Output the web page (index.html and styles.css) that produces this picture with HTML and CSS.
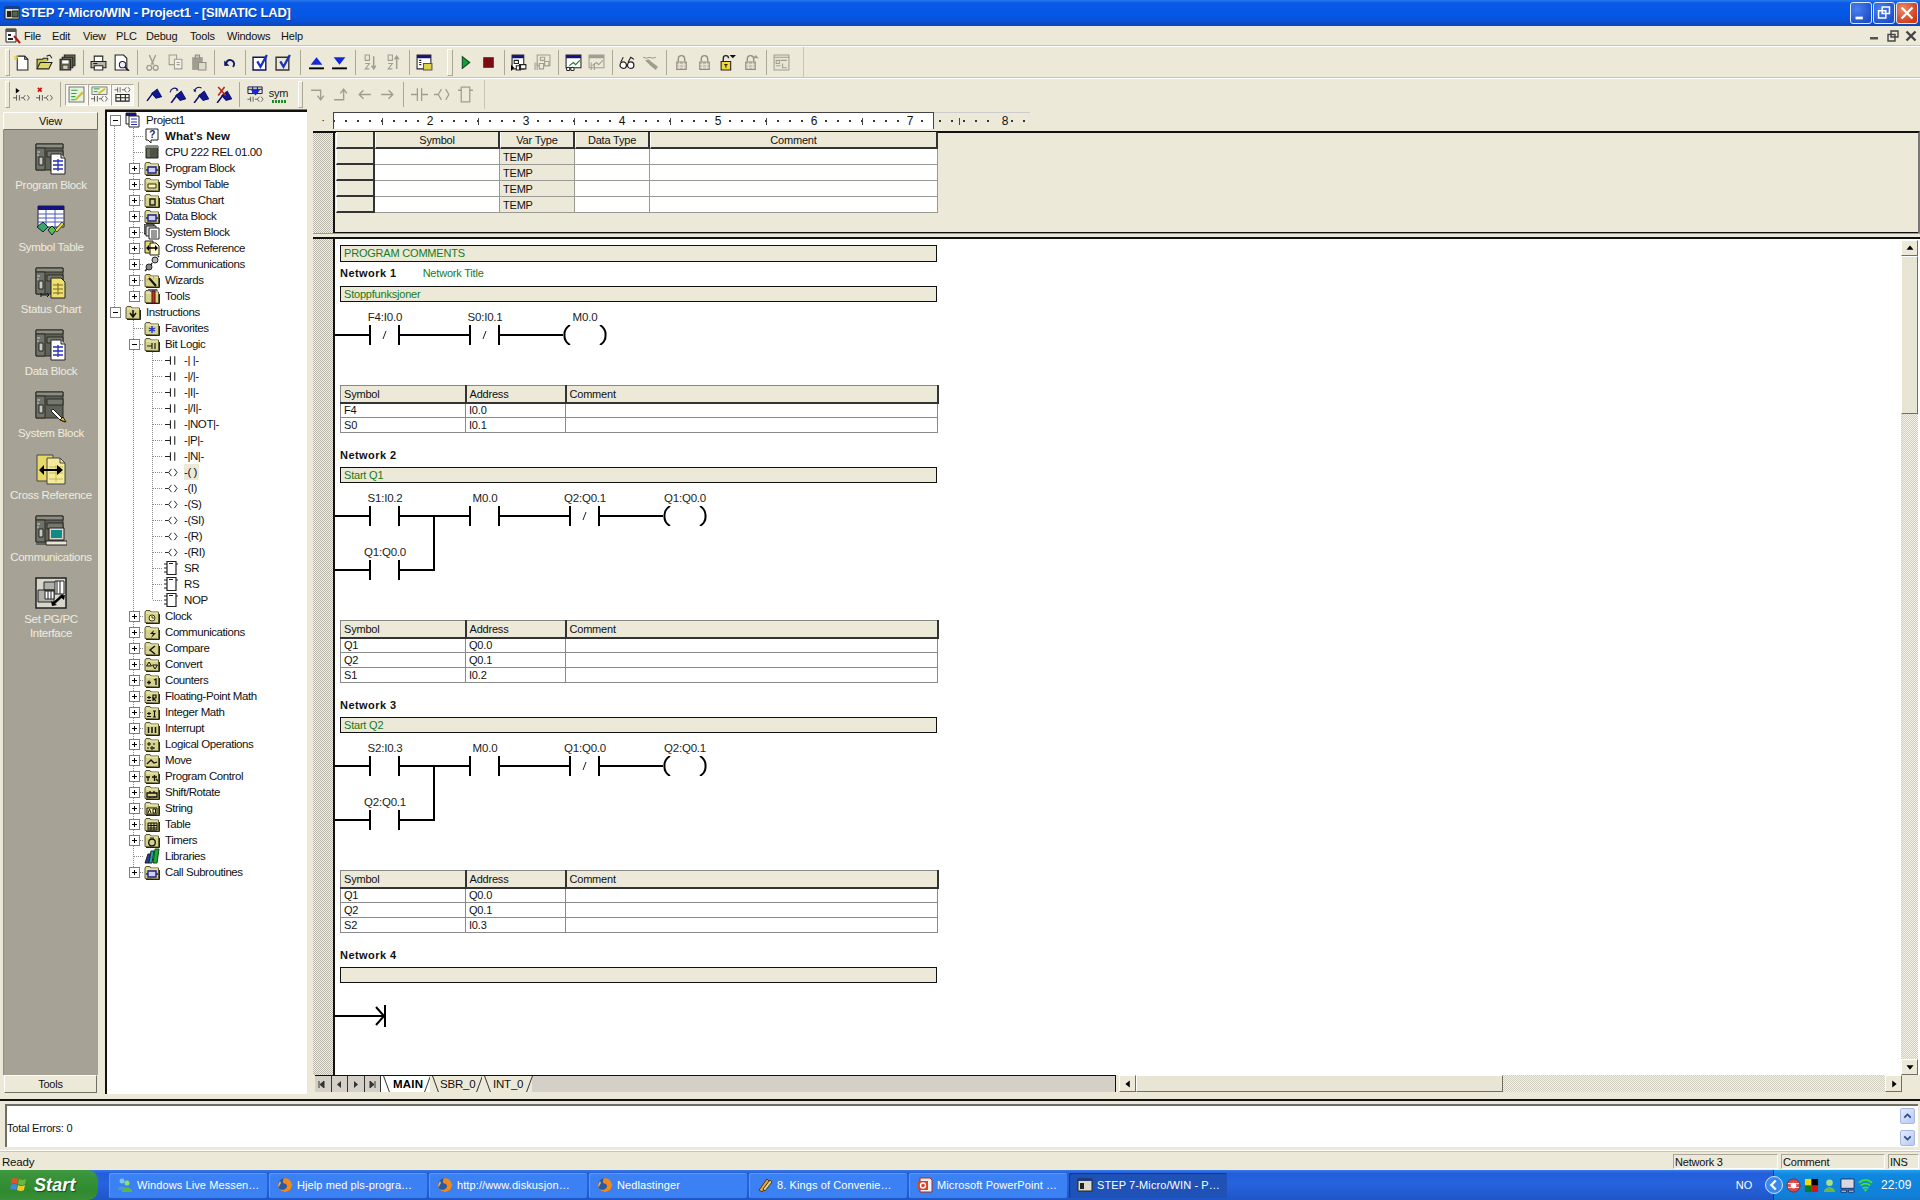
FILE: index.html
```html
<!DOCTYPE html>
<html lang="en">
<head>
<meta charset="utf-8">
<title>STEP 7-Micro/WIN - Project1 - [SIMATIC LAD]</title>
<link rel="stylesheet" href="styles.css">
</head>
<body>
<svg class="defs" aria-hidden="true">
  <defs>
    <symbol id="f" viewBox="0 0 16 16"><path d="M1 14.500V4l1-1.500h4l1 1.500h7.500v11z" fill="#d6d28a" stroke="#5c5a30"/><path d="M2 5h12" stroke="#f4f2c8"/><path d="M2 15.500h13.500V6" fill="none" stroke="#222"/></symbol>
    <symbol id="chip" viewBox="0 0 16 16"><path d="M4 7h8v6H4z" fill="#d0d0e8" stroke="#20208a" stroke-width="1.400"/><path d="M2 10h2M12 10h2" stroke="#20208a" stroke-width="1.400"/></symbol>
    <symbol id="ct" viewBox="0 0 12 12"><path d="M0 6h5M5 2v8M9 2v8" fill="none" stroke="#222"/></symbol>
    <symbol id="co" viewBox="0 0 14 12"><path d="M0 6h4M7 2 4 6l3 4M10 2l3 4-3 4" fill="none" stroke="#222"/></symbol>
    <symbol id="bx" viewBox="0 0 16 16"><path d="M4 1.500h9v13H4z" fill="#fff" stroke="#222" stroke-width="1.200"/><path d="M1 4h3M1 8h3M1 12h3M13 4h2M6 3.500h4" stroke="#222"/></symbol>
    <symbol id="ff" viewBox="0 0 16 16"><circle cx="8" cy="8" r="7" fill="#2a57a8"/><path d="M8 1a7 7 0 1 1-6.500 9.500C3 13 6 13.500 8 12c3-1.500 2.500-5-.5-5.500C6 6 5 5 6.500 3.500 5.500 3 6.500 1.500 8 1z" fill="#ec8a1e"/><path d="M3 4c-2 3-2 5-1.500 6.500L4 6z" fill="#f2b33a"/></symbol>
    <symbol id="plc" viewBox="0 0 32 32"><path d="M1 1h27v26H1z" fill="#5f6258" stroke="#2a2a24"/><path d="M1 1h27v4H1z" fill="#8b8d82" stroke="#2a2a24"/><path d="M1 5h9v22H1z" fill="#6f7268" stroke="#2a2a24"/><path d="M4 14h4v8H4z" fill="#c8c8c0" stroke="#222"/><path d="M12 8h16v6H12z" fill="#74776d" stroke="#2a2a24"/><path d="M2 9h3M2 12h2" stroke="#cfd0c8"/></symbol>
    <symbol id="doc" viewBox="0 0 32 32"><path d="M16 11h10l4 4v16H16z" fill="#fff" stroke="#222"/><path d="M26 11v4h4" fill="#ddd" stroke="#222"/><path d="M18 18h10M18 22h10M18 26h10M23 16v12" stroke="#2630b8" stroke-width="1.300"/></symbol>
    <symbol id="flag" viewBox="0 0 16 16"><path d="M1 14 7 6" stroke="#10106a" stroke-width="1.400"/><path d="m5.500 7 5-4 4 7-5 1.500z" fill="#101896" stroke="#10106a"/></symbol>
    <symbol id="lock" viewBox="0 0 14 16"><path d="M2.500 7.500h9v7h-9z" fill="#c0bdb0" stroke="#918e80"/><path d="M4 7V4.500a3 3 0 0 1 6 0V7" fill="none" stroke="#918e80" stroke-width="1.300"/><path d="M3 10h8M3 12.500h8M5 8v6M9 8v6" stroke="#e4e1d4"/></symbol>
    <symbol id="ladct" viewBox="0 0 31 20"><path d="M1 0v20M30 0v20" stroke="#000" stroke-width="2" fill="none"/></symbol>
    <symbol id="ladnc" viewBox="0 0 31 20"><path d="M1 0v20M30 0v20" stroke="#000" stroke-width="2" fill="none"/><path d="m14 14 3-8" stroke="#222" fill="none"/></symbol>
    <symbol id="ladco" viewBox="0 0 44 20"><path d="M7 0Q1 4 1.500 10 1 16 7 20M37 0q6 4 5.500 10 .5 6-5.500 10" stroke="#000" stroke-width="2" fill="none"/></symbol>
  </defs>
</svg>

<div class="app">
  <header class="titlebar">
    <svg class="title-ic" viewBox="0 0 16 16"><path d="M1 2h14v12H1z" fill="#dedbc8" stroke="#222"/><path d="M1 2h14v2H1z" fill="#1c3c8c"/><path d="M3 6h4v6H3z" fill="#222"/><path d="M8 6h6v6H8z" fill="#4a6a4a" stroke="#222"/></svg>
    <span class="title-text">STEP 7-Micro/WIN - Project1 - [SIMATIC LAD]</span>
    <span class="win-btn"><svg viewBox="0 0 22 22"><path d="M5 15h8v3H5z" fill="#fff"/></svg></span>
    <span class="win-btn"><svg viewBox="0 0 22 22"><path d="M9 4.500h8v7H9zM5 8.500h8v8H5z" fill="none" stroke="#fff" stroke-width="1.600"/></svg></span>
    <span class="win-btn close"><svg viewBox="0 0 22 22"><path d="m5 5 12 12M17 5 5 17" stroke="#fff" stroke-width="2.400"/></svg></span>
  </header>

  <nav class="menubar">
    <svg class="menu-ic" viewBox="0 0 16 16"><path d="M1 1h10v13H1z" fill="#fff" stroke="#222"/><path d="M1 1h10v3H1z" fill="#55584e"/><path d="M3 6h3v2H3zM3 10h5v2H3z" fill="#222"/><path d="m9 8 6 7" stroke="#b01818" stroke-width="2"/></svg>
    <span class="mi m1">File</span><span class="mi m2">Edit</span><span class="mi m3">View</span><span class="mi m4">PLC</span><span class="mi m5">Debug</span><span class="mi m6">Tools</span><span class="mi m7">Windows</span><span class="mi m8">Help</span>
    <span class="mdi-btns">
      <span class="mdi"><svg viewBox="0 0 14 14"><path d="M2 8h8v2.500H2z" fill="#55554c"/></svg></span>
      <span class="mdi"><svg viewBox="0 0 14 14"><path d="M5 2h7v6H5zM2 5.500h7V12H2z" fill="none" stroke="#444" stroke-width="1.400"/></svg></span>
      <span class="mdi"><svg viewBox="0 0 14 14"><path d="m2.500 2.500 9 9M11.500 2.500l-9 9" stroke="#444" stroke-width="2.400"/></svg></span>
    </span>
  </nav>

  <div class="toolrow tr1">
    <i class="grip"></i>
    <span class="tb"><svg viewBox="0 0 16 16"><path d="M4 2h7l3 3v10H4z" fill="#fff" stroke="#222"/><path d="M11 2v3h3" fill="none" stroke="#222"/><path d="M1 2l3 3M4 1v3M1 5h3" stroke="#e8c820"/></svg></span>
    <span class="tb"><svg viewBox="0 0 16 16"><path d="M1 14V5h5l1-1h4v2" fill="#c8c44a" stroke="#222"/><path d="M1 14 4 8h11l-3 6z" fill="#dcd866" stroke="#222"/><path d="m10 2 3-1 2 3" fill="none" stroke="#222"/></svg></span>
    <span class="tb"><svg viewBox="0 0 16 16"><path d="M5 1h10v10H5z" fill="#70705a" stroke="#222"/><path d="M3 3h10v10H3z" fill="#7c7c62" stroke="#222"/><path d="M1 5h10v10H1z" fill="#5c5c48" stroke="#222"/><path d="M3 6h6v3H3z" fill="#fff"/><path d="M4 11h4v3H4z" fill="#d0d0c0"/></svg></span>
    <i class="ts"></i>
    <span class="tb"><svg viewBox="0 0 16 16"><path d="M4 2h8v5H4z" fill="#fff" stroke="#222"/><path d="M1 7h14v6H1z" fill="#b8b6a8" stroke="#222"/><path d="M4 11h8v4H4z" fill="#fff" stroke="#222"/><path d="M3 9h4" stroke="#222"/></svg></span>
    <span class="tb"><svg viewBox="0 0 16 16"><path d="M2 1h8l3 3v11H2z" fill="#fff" stroke="#222"/><circle cx="9" cy="10" r="3" fill="#eef" stroke="#222"/><path d="m11 12 4 4" stroke="#222" stroke-width="1.600"/></svg></span>
    <i class="ts"></i>
    <span class="tb"><svg viewBox="0 0 16 16"><path d="M5 1l4 9M11 1 7 10" stroke="#a09e90" stroke-width="1.300"/><circle cx="5" cy="13" r="2.300" fill="none" stroke="#a09e90" stroke-width="1.200"/><circle cx="11" cy="13" r="2.300" fill="none" stroke="#a09e90" stroke-width="1.200"/></svg></span>
    <span class="tb"><svg viewBox="0 0 16 16"><path d="M2 1h7v9H2z" fill="#ece9d8" stroke="#a09e90"/><path d="M7 5h7v9H7z" fill="#f4f2e8" stroke="#a09e90"/><path d="M9 8h3M9 10h3" stroke="#a09e90"/></svg></span>
    <span class="tb"><svg viewBox="0 0 16 16"><path d="M2 3h10v12H2z" fill="#a09e90"/><path d="M5 1h4v3H5z" fill="#c8c6b8" stroke="#908e80"/><path d="M8 8h7v7H8z" fill="#dedccc" stroke="#908e80"/></svg></span>
    <i class="ts"></i>
    <span class="tb"><svg viewBox="0 0 16 16"><path d="M5 11C4 7 7 5 10 6c3 1 3 5 1 6" fill="none" stroke="#10186a" stroke-width="1.800"/><path d="M3 6v5h5z" fill="#10186a"/></svg></span>
    <i class="ts"></i>
    <span class="tb"><svg viewBox="0 0 16 16"><path d="M1 3h12v12H1z" fill="#fff" stroke="#10105a" stroke-width="1.300"/><path d="m5 7 3 5 6-11" fill="none" stroke="#1830c0" stroke-width="2.200"/></svg></span>
    <span class="tb"><svg viewBox="0 0 16 16"><path d="M1 3h12v12H1z" fill="#ece9d8" stroke="#333" stroke-width="1.300"/><path d="m5 7 3 5 6-11" fill="none" stroke="#1830c0" stroke-width="2.200"/></svg></span>
    <i class="ts wide"></i>
    <span class="tb"><svg viewBox="0 0 16 16"><path d="M8 3l5.500 7h-11z" fill="#1428d8"/><path d="M1 13.500h14" stroke="#000" stroke-width="1.800"/></svg></span>
    <span class="tb"><svg viewBox="0 0 16 16"><path d="M8 10 2.500 3h11z" fill="#1428d8"/><path d="M1 13.500h14" stroke="#000" stroke-width="1.800"/></svg></span>
    <i class="ts"></i>
    <span class="tb"><svg viewBox="0 0 16 16"><path d="M3 1h4v5H3zM3 9h4l-4 5h4" fill="none" stroke="#a09e90"/><path d="M11 2v12m-2-3 2 3 2-3" fill="none" stroke="#a09e90" stroke-width="1.400"/></svg></span>
    <span class="tb"><svg viewBox="0 0 16 16"><path d="M3 1h4v5H3zM3 9h4l-4 5h4" fill="none" stroke="#a09e90"/><path d="M11 14V2m-2 3 2-3 2 3" fill="none" stroke="#a09e90" stroke-width="1.400"/></svg></span>
    <i class="ts"></i>
    <span class="tb"><svg viewBox="0 0 16 16"><path d="M1 1h13v13H1z" fill="#fff" stroke="#222"/><path d="M1 1h13v3H1z" fill="#14147a"/><path d="M7 9h8v6H7z" fill="#dcd24c" stroke="#555"/><path d="M3 6h2M3 8h2M3 10h2" stroke="#222"/></svg></span>
    <i class="grip gap-grip"></i>
    <span class="tb"><svg viewBox="0 0 16 16"><path d="M5 2.500 12 8l-7 5.500z" fill="#14a030" stroke="#0a4a20"/></svg></span>
    <span class="tb"><svg viewBox="0 0 16 16"><path d="M3 3h10v10H3z" fill="#7a0c12"/></svg></span>
    <i class="ts"></i>
    <span class="tb"><svg viewBox="0 0 16 16"><path d="M1 1h11v13H1z" fill="#fff" stroke="#222"/><path d="M1 1h11v3H1z" fill="#14147a"/><path d="M3 6h4v3H3zM8 10h6v4H8zM5 11h4v4H5z" fill="#fff" stroke="#222"/><path d="M0 10v6l3-3z" fill="#000"/></svg></span>
    <span class="tb"><svg viewBox="0 0 16 16"><path d="M3 1h12v10H3z" fill="#ece9d8" stroke="#a09e90"/><path d="M6 3h4v3H6zM10 7h4v4h-4zM5 9h4v5H5z" fill="#ece9d8" stroke="#a09e90"/><path d="M1 8v7M3 8v7" stroke="#a09e90"/></svg></span>
    <i class="ts"></i>
    <span class="tb"><svg viewBox="0 0 16 16"><path d="M1 1h14v12H1z" fill="#fff" stroke="#222"/><path d="M1 1h14v3H1z" fill="#14147a"/><path d="m4 11 4-3 2 2 4-4" fill="none" stroke="#1a7a2a"/><circle cx="3" cy="14" r="1.600" fill="#fff" stroke="#222"/><circle cx="7" cy="14" r="1.600" fill="#fff" stroke="#222"/></svg></span>
    <span class="tb"><svg viewBox="0 0 16 16"><path d="M1 1h14v12H1z" fill="#ece9d8" stroke="#a09e90"/><path d="M1 1h14v3H1z" fill="#a09e90"/><path d="m4 11 4-3 2 2 4-4" fill="none" stroke="#a09e90"/><path d="M3 8v7M6 9v6" stroke="#a09e90"/></svg></span>
    <i class="ts"></i>
    <span class="tb"><svg viewBox="0 0 16 16"><circle cx="4" cy="10.500" r="3" fill="#fff" stroke="#222" stroke-width="1.200"/><circle cx="11" cy="10.500" r="3" fill="#fff" stroke="#222" stroke-width="1.200"/><path d="M1.500 8 4 3M8.500 8 11 3l3 2" fill="none" stroke="#222"/></svg></span>
    <span class="tb"><svg viewBox="0 0 16 16"><path d="m1 3 3 1 3-1 3 1 3-1" fill="none" stroke="#a09e90"/><path d="m3 6 6 6 4 3 2-3-4-3-5-4z" fill="#a09e90"/></svg></span>
    <i class="ts"></i>
    <span class="tb"><svg viewBox="0 0 14 16"><use href="#lock"/></svg></span>
    <span class="tb"><svg viewBox="0 0 14 16"><use href="#lock"/></svg></span>
    <span class="tb"><svg viewBox="0 0 16 16"><path d="M2 7h9v8H2z" fill="#f0d838" stroke="#222"/><path d="M4 7V4a2.500 2.500 0 0 1 5 0" fill="none" stroke="#222" stroke-width="1.300"/><path d="M10 1h6l-3 3z" fill="#111"/><path d="M5 10h3M6.500 10v3" stroke="#222"/></svg></span>
    <span class="tb"><svg viewBox="0 0 16 16"><use href="#lock"/><path d="M10 4h6l-3-3z" fill="#a09e90"/></svg></span>
    <i class="ts"></i>
    <span class="tb"><svg viewBox="0 0 16 16"><path d="M1 1h14v14H1z" fill="#e8e5d4" stroke="#a09e90"/><path d="M1 3h14M3 6h3v3H3zM7 6h6M9 9v4h4M3 11h4" fill="none" stroke="#a09e90"/></svg></span>
    <i class="toolend t1end"></i>
  </div>

  <div class="toolrow tr2">
    <i class="grip"></i>
    <span class="tb"><svg viewBox="0 0 18 18"><path d="M3 2v6l4-3z" fill="#000"/><use href="#ct" x="0" y="8" width="9" height="9"/><use href="#co" x="8" y="8" width="10" height="9"/></svg></span>
    <span class="tb"><svg viewBox="0 0 18 18"><path d="m2 2 4 4M6 2 2 6" stroke="#d01010" stroke-width="1.800"/><use href="#ct" x="0" y="8" width="9" height="9"/><use href="#co" x="8" y="8" width="10" height="9"/></svg></span>
    <i class="ts"></i>
    <span class="tb on"><svg viewBox="0 0 16 16"><path d="M1 1h14v14H1z" fill="#e4f4e0" stroke="#777"/><path d="M3 4h6M3 7h5M3 10h4M3 13h4" stroke="#30a040"/><path d="m7 13 7-7" stroke="#d8c020" stroke-width="2"/></svg></span>
    <span class="tb on"><svg viewBox="0 0 18 18"><path d="M1 1h16v8H1z" fill="#e4f4e0" stroke="#777"/><path d="M3 3h6M3 6h4" stroke="#30a040"/><path d="m8 8 7-5" stroke="#d8c020" stroke-width="2"/><use href="#ct" x="0" y="9" width="9" height="9"/><use href="#co" x="8" y="9" width="10" height="9"/></svg></span>
    <span class="tb on"><svg viewBox="0 0 18 18"><use href="#ct" x="0" y="0" width="9" height="8"/><use href="#co" x="8" y="0" width="10" height="8"/><path d="M2 9h14v7H2zM2 12.500h14M7 9v7M12 9v7" fill="none" stroke="#222" stroke-width="1.100"/></svg></span>
    <i class="ts"></i>
    <span class="tb"><svg viewBox="0 0 16 16"><use href="#flag"/></svg></span>
    <span class="tb"><svg viewBox="0 0 16 16"><path d="M1 6c1-4 4-5 7-3" fill="none" stroke="#10106a"/><path d="m7 2 2 2-2 1z" fill="#10106a"/><use href="#flag" x="1" y="2"/></svg></span>
    <span class="tb"><svg viewBox="0 0 16 16"><path d="M9 2C6 0 3 2 2 5" fill="none" stroke="#10106a"/><path d="m1 3 2 3 1-2z" fill="#10106a"/><use href="#flag" x="1" y="2"/></svg></span>
    <span class="tb"><svg viewBox="0 0 16 16"><use href="#flag" x="1" y="2"/><path d="m3 1 7 8M9 1 3 9" stroke="#b82818" stroke-width="1.500"/></svg></span>
    <i class="ts"></i>
    <span class="tb"><svg viewBox="0 0 18 18"><path d="M1 1h15v7H1zM1 3.500h15M6 1v7M11 1v7" fill="none" stroke="#10105a"/><path d="M4 4h10L9 10z" fill="#1428d8"/><use href="#ct" x="0" y="10" width="9" height="8"/><use href="#co" x="8" y="10" width="10" height="8"/></svg></span>
    <span class="tb sym">sym<i class="sym-w"></i></span>
    <i class="grip grip2"></i>
    <span class="tb"><svg viewBox="0 0 16 16"><path d="M1 4h9v8m-3-3 3 4 3-4" fill="none" stroke="#a09e90" stroke-width="1.300"/></svg></span>
    <span class="tb"><svg viewBox="0 0 16 16"><path d="M1 13h9V4M7 7l3-4 3 4" fill="none" stroke="#a09e90" stroke-width="1.300"/></svg></span>
    <span class="tb"><svg viewBox="0 0 16 16"><path d="M14 8H3m4-4L3 8l4 4" fill="none" stroke="#a09e90" stroke-width="1.300"/></svg></span>
    <span class="tb"><svg viewBox="0 0 16 16"><path d="M2 8h11M9 4l4 4-4 4" fill="none" stroke="#a09e90" stroke-width="1.300"/></svg></span>
    <i class="ts"></i>
    <span class="tb"><svg viewBox="0 0 16 16"><path d="M0 8h6M6 2v12M10 2v12M10 8h6" fill="none" stroke="#a09e90" stroke-width="1.200"/></svg></span>
    <span class="tb"><svg viewBox="0 0 16 16"><path d="M0 8h4M7 3 4 8l3 5M11 3l3 5-3 5" fill="none" stroke="#a09e90" stroke-width="1.200"/></svg></span>
    <span class="tb"><svg viewBox="0 0 16 16"><path d="M4 1h8v14H4zM1 4h3M12 4h3" fill="none" stroke="#a09e90" stroke-width="1.200"/></svg></span>
    <i class="toolend t2end"></i>
  </div>

  <main class="main">
    <aside class="nav">
      <div class="nav-head">View</div>
      <div class="nav-list">
        <div class="nav-item"><svg viewBox="0 0 32 32"><use href="#plc"/><use href="#doc"/></svg><span>Program Block</span></div>
        <div class="nav-item"><svg viewBox="0 0 32 32"><path d="M3 1h26v21H3z" fill="#fff" stroke="#222"/><path d="M3 1h26v4H3z" fill="#14147a"/><path d="M3 9h26M3 13h26M3 17h26M11 5v17M20 5v17" stroke="#4a5ac0"/><path d="m2 22 6-5 5 5-5 5z" fill="#38a868" stroke="#124"/><path d="m13 25 4-4 4 4-4 5z" fill="#58c048" stroke="#124"/><path d="m20 25 7-8 2 2-7 8z" fill="#e8d840" stroke="#444"/></svg><span>Symbol Table</span></div>
        <div class="nav-item"><svg viewBox="0 0 32 32"><use href="#plc"/><path d="M16 11h10l4 4v16H16z" fill="#f0e070" stroke="#222"/><path d="M18 18h10M18 22h10M18 26h10M23 16v12" stroke="#7a6a20"/><path d="M6 28h8m-2-2 2 2-2 2M6 26v4" stroke="#111" fill="none"/></svg><span>Status Chart</span></div>
        <div class="nav-item"><svg viewBox="0 0 32 32"><use href="#plc"/><use href="#doc"/></svg><span>Data Block</span></div>
        <div class="nav-item"><svg viewBox="0 0 32 32"><use href="#plc"/><path d="m18 18 9 9 3 4-5-2-9-9z" fill="#fff" stroke="#222"/><path d="m25 29 3-3 3 5z" fill="#e8b820" stroke="#222"/></svg><span>System Block</span></div>
        <div class="nav-item"><svg viewBox="0 0 32 32"><path d="M2 2h16v26H2z" fill="#e8d868" stroke="#444"/><path d="M12 5h13l5 5v21H12z" fill="#f4ec9c" stroke="#444"/><path d="M25 5v5h5" fill="none" stroke="#444"/><path d="M14 14h14M14 20h14M14 26h14M21 12v17" stroke="#c8b850"/><path d="M7 17h18" stroke="#000" stroke-width="2"/><path d="m9 12-5 5 5 5zM22 12l6 5-6 5z" fill="#000"/></svg><span>Cross Reference</span></div>
        <div class="nav-item"><svg viewBox="0 0 32 32"><use href="#plc"/><path d="M14 13h15v12H14z" fill="#d8d6c8" stroke="#222"/><path d="M16 15h11v8H16z" fill="#108a8a"/><path d="M11 26h21v4H11z" fill="#e8e6d8" stroke="#222"/><path d="M1 29h10" stroke="#222"/></svg><span>Communications</span></div>
        <div class="nav-item"><svg viewBox="0 0 32 32"><path d="M1 1h30v30H1z" fill="#d8d6cc" stroke="#222" stroke-width="1.500"/><path d="M9 5h12v8H9zM3 13h16v12H3z" fill="#b0b0a8" stroke="#222"/><path d="M20 4h9v13h-9zM22 4v13M25 4v13M10 14h9v8h-9zM13 14v8M16 14v8" fill="#fff" stroke="#222"/><path d="m18 27 10-9" stroke="#000" stroke-width="2.400"/><path d="m16 24 1 5 5-1zM24 19l6-1-1 5z" fill="#000"/></svg><span>Set PG/PC<br>Interface</span></div>
      </div>
      <div class="nav-foot">Tools</div>
    </aside>

    <section class="tree">
      <div class="row"><i class="c m top"></i><svg class="ic" viewBox="0 0 16 16"><path d="M1 1h10v11H1z" fill="#fff" stroke="#222"/><path d="M1 1h10v3H1z" fill="#14147a"/><path d="M4 4h10v11H4z" fill="#fff" stroke="#222"/><path d="M6 7h6M6 10h6M6 12.500h6" stroke="#2630b8"/></svg><span>Project1</span></div>
      <div class="row"><i class="c v"></i><i class="c t"></i><svg class="ic" viewBox="0 0 16 16"><path d="M2 1h12v11H7v3l-3-3H2z" fill="#fff" stroke="#222"/><text class="qm" x="8" y="10" text-anchor="middle">?</text></svg><b>What's New</b></div>
      <div class="row"><i class="c v"></i><i class="c t"></i><svg class="ic" viewBox="0 0 16 16"><path d="M2 2h12v12H2z" fill="#4e5348" stroke="#222"/><path d="M2 2h12v2H2z" fill="#8a8c80"/><path d="M3 5h3v8H3z" fill="#6a6e62"/></svg><span>CPU 222 REL 01.00</span></div>
      <div class="row"><i class="c v"></i><i class="c t p"></i><svg class="ic" viewBox="0 0 16 16"><use href="#f"/><use href="#chip"/></svg><span>Program Block</span></div>
      <div class="row"><i class="c v"></i><i class="c t p"></i><svg class="ic" viewBox="0 0 16 16"><use href="#f"/><path d="M4 8h8v4H4z" fill="#fff8a0" stroke="#333"/></svg><span>Symbol Table</span></div>
      <div class="row"><i class="c v"></i><i class="c t p"></i><svg class="ic" viewBox="0 0 16 16"><use href="#f"/><path d="M6 7h5v6H6z" fill="none" stroke="#222" stroke-width="1.500"/></svg><span>Status Chart</span></div>
      <div class="row"><i class="c v"></i><i class="c t p"></i><svg class="ic" viewBox="0 0 16 16"><use href="#f"/><use href="#chip"/></svg><span>Data Block</span></div>
      <div class="row"><i class="c v"></i><i class="c t p"></i><svg class="ic" viewBox="0 0 16 16"><path d="M0 0h10v10H0z" fill="#888" stroke="#222"/><path d="M2 2h10v10H2z" fill="#ddd" stroke="#222"/><path d="M5 4h10v11H5z" fill="#fff" stroke="#222"/><path d="M7 7h6M7 9h6M7 11h6M7 13h6" stroke="#333"/></svg><span>System Block</span></div>
      <div class="row"><i class="c v"></i><i class="c t p"></i><svg class="ic" viewBox="0 0 16 16"><path d="M1 1h8v12H1z" fill="#e8d868" stroke="#222"/><path d="M6 3h6l3 3v9H6z" fill="#fff8c8" stroke="#222"/><path d="M3 8h10" stroke="#000" stroke-width="1.500"/><path d="M5 5 2 8l3 3zM11 5l3 3-3 3z" fill="#000"/></svg><span>Cross Reference</span></div>
      <div class="row"><i class="c v"></i><i class="c t p"></i><svg class="ic" viewBox="0 0 16 16"><circle cx="11" cy="4" r="3" fill="#b8b8b0" stroke="#222"/><circle cx="5" cy="11" r="3" fill="#888" stroke="#222"/><path d="m8 7-1 2M1 15l2-2M14 1l1-1" stroke="#222" stroke-width="1.500"/></svg><span>Communications</span></div>
      <div class="row"><i class="c v"></i><i class="c t p"></i><svg class="ic" viewBox="0 0 16 16"><use href="#f"/><path d="m5 6 7 8" stroke="#111" stroke-width="2"/><path d="M4 4l2 1M9 4l1 2M3 8l2-1" stroke="#e09018"/></svg><span>Wizards</span></div>
      <div class="row"><i class="c v"></i><i class="c l p"></i><svg class="ic" viewBox="0 0 16 16"><use href="#f"/><path d="M4 1h9l1 2H4z" fill="#667"/><path d="M8 3h3v12H8z" fill="#c83818" stroke="#511"/></svg><span>Tools</span></div>
      <div class="row"><i class="c m last"></i><svg class="ic" viewBox="0 0 16 16"><use href="#f"/><path d="M8 6v6m-3-3 3 4 3-4" fill="none" stroke="#111" stroke-width="1.500"/></svg><span>Instructions</span></div>
      <div class="row"><i class="c"></i><i class="c t"></i><svg class="ic" viewBox="0 0 16 16"><use href="#f"/><path d="M8 6v7M5 8l6 3M11 8l-6 3" stroke="#1428d8" stroke-width="1.300"/></svg><span>Favorites</span></div>
      <div class="row"><i class="c"></i><i class="c t m"></i><svg class="ic" viewBox="0 0 16 16"><use href="#f"/><path d="M3 10h5M8 7v6M11 7v6" stroke="#222" stroke-width="1.200"/></svg><span>Bit Logic</span></div>

      <div class="row"><i class="c"></i><i class="c v"></i><i class="c t"></i><svg class="ic small" viewBox="0 0 12 12"><use href="#ct"/></svg><span>-| |-</span></div>
      <div class="row"><i class="c"></i><i class="c v"></i><i class="c t"></i><svg class="ic small" viewBox="0 0 12 12"><use href="#ct"/></svg><span>-|/|-</span></div>
      <div class="row"><i class="c"></i><i class="c v"></i><i class="c t"></i><svg class="ic small" viewBox="0 0 12 12"><use href="#ct"/></svg><span>-|I|-</span></div>
      <div class="row"><i class="c"></i><i class="c v"></i><i class="c t"></i><svg class="ic small" viewBox="0 0 12 12"><use href="#ct"/></svg><span>-|/I|-</span></div>
      <div class="row"><i class="c"></i><i class="c v"></i><i class="c t"></i><svg class="ic small" viewBox="0 0 12 12"><use href="#ct"/></svg><span>-|NOT|-</span></div>
      <div class="row"><i class="c"></i><i class="c v"></i><i class="c t"></i><svg class="ic small" viewBox="0 0 12 12"><use href="#ct"/></svg><span>-|P|-</span></div>
      <div class="row"><i class="c"></i><i class="c v"></i><i class="c t"></i><svg class="ic small" viewBox="0 0 12 12"><use href="#ct"/></svg><span>-|N|-</span></div>
      <div class="row"><i class="c"></i><i class="c v"></i><i class="c t"></i><svg class="ic small" viewBox="0 0 14 12"><use href="#co"/></svg><span class="sel">-( )</span></div>
      <div class="row"><i class="c"></i><i class="c v"></i><i class="c t"></i><svg class="ic small" viewBox="0 0 14 12"><use href="#co"/></svg><span>-(I)</span></div>
      <div class="row"><i class="c"></i><i class="c v"></i><i class="c t"></i><svg class="ic small" viewBox="0 0 14 12"><use href="#co"/></svg><span>-(S)</span></div>
      <div class="row"><i class="c"></i><i class="c v"></i><i class="c t"></i><svg class="ic small" viewBox="0 0 14 12"><use href="#co"/></svg><span>-(SI)</span></div>
      <div class="row"><i class="c"></i><i class="c v"></i><i class="c t"></i><svg class="ic small" viewBox="0 0 14 12"><use href="#co"/></svg><span>-(R)</span></div>
      <div class="row"><i class="c"></i><i class="c v"></i><i class="c t"></i><svg class="ic small" viewBox="0 0 14 12"><use href="#co"/></svg><span>-(RI)</span></div>
      <div class="row"><i class="c"></i><i class="c v"></i><i class="c t"></i><svg class="ic" viewBox="0 0 16 16"><use href="#bx"/></svg><span>SR</span></div>
      <div class="row"><i class="c"></i><i class="c v"></i><i class="c t"></i><svg class="ic" viewBox="0 0 16 16"><use href="#bx"/></svg><span>RS</span></div>
      <div class="row"><i class="c"></i><i class="c v"></i><i class="c l"></i><svg class="ic" viewBox="0 0 16 16"><use href="#bx"/></svg><span>NOP</span></div>

      <div class="row"><i class="c"></i><i class="c t p"></i><svg class="ic" viewBox="0 0 16 16"><use href="#f"/><circle cx="8" cy="10" r="3" fill="#fff8a0" stroke="#333"/><path d="M8 8v2h2" stroke="#333" fill="none"/></svg><span>Clock</span></div>
      <div class="row"><i class="c"></i><i class="c t p"></i><svg class="ic" viewBox="0 0 16 16"><use href="#f"/><path d="m10 6-4 4h3l-2 4 5-5H9z" fill="#111"/></svg><span>Communications</span></div>
      <div class="row"><i class="c"></i><i class="c t p"></i><svg class="ic" viewBox="0 0 16 16"><use href="#f"/><path d="m11 6-5 4 5 4" fill="none" stroke="#111" stroke-width="1.500"/></svg><span>Compare</span></div>
      <div class="row"><i class="c"></i><i class="c t p"></i><svg class="ic" viewBox="0 0 16 16"><use href="#f"/><path d="M5 6 2.500 10h5zM11 13l2.500-4h-5z" fill="none" stroke="#111"/></svg><span>Convert</span></div>
      <div class="row"><i class="c"></i><i class="c t p"></i><svg class="ic" viewBox="0 0 16 16"><use href="#f"/><path d="M3 10.500h4M5 8.500v4M10 8l2-1v6" fill="none" stroke="#111" stroke-width="1.300"/></svg><span>Counters</span></div>
      <div class="row"><i class="c"></i><i class="c t p"></i><svg class="ic" viewBox="0 0 16 16"><use href="#f"/><path d="M3 9.500h4M5 8v3M3 12.500h4M9 13V7h3v3H9l3 3" fill="none" stroke="#111" stroke-width="1.200"/></svg><span>Floating-Point Math</span></div>
      <div class="row"><i class="c"></i><i class="c t p"></i><svg class="ic" viewBox="0 0 16 16"><use href="#f"/><path d="M3 9.500h4M5 8v3M3 12.500h4M9 7h3M10.500 7v6M9 13h3" fill="none" stroke="#111" stroke-width="1.200"/></svg><span>Integer Math</span></div>
      <div class="row"><i class="c"></i><i class="c t p"></i><svg class="ic" viewBox="0 0 16 16"><use href="#f"/><path d="M4.500 7v6M8 7v6M11.500 7v6" stroke="#111" stroke-width="1.500"/></svg><span>Interrupt</span></div>
      <div class="row"><i class="c"></i><i class="c t p"></i><svg class="ic" viewBox="0 0 16 16"><use href="#f"/><path d="M4 7h2v2H4zM10 7v2M10 11v2M4 11v2M7 11h2v2H7z" fill="none" stroke="#111"/></svg><span>Logical Operations</span></div>
      <div class="row"><i class="c"></i><i class="c t p"></i><svg class="ic" viewBox="0 0 16 16"><use href="#f"/><path d="m3 12 4-4 3 3 3-1" fill="none" stroke="#111" stroke-width="1.300"/></svg><span>Move</span></div>
      <div class="row"><i class="c"></i><i class="c t p"></i><svg class="ic" viewBox="0 0 16 16"><use href="#f"/><path d="M2 9h4M4 9v4M8 9h5M10.500 7v6M12 11l2 2" fill="none" stroke="#111" stroke-width="1.300"/></svg><span>Program Control</span></div>
      <div class="row"><i class="c"></i><i class="c t p"></i><svg class="ic" viewBox="0 0 16 16"><use href="#f"/><path d="M3 9h10v4H3zM6 7v2M10 7v2M6 13v1M10 13v1" fill="none" stroke="#111" stroke-width="1.300"/></svg><span>Shift/Rotate</span></div>
      <div class="row"><i class="c"></i><i class="c t p"></i><svg class="ic" viewBox="0 0 16 16"><use href="#f"/><path d="M3 8h10v6H3z" fill="#fff8a0" stroke="#111"/><path d="m4 13 1.500-4 1.500 4M9 9v4h2.500V9z" fill="none" stroke="#111"/></svg><span>String</span></div>
      <div class="row"><i class="c"></i><i class="c t p"></i><svg class="ic" viewBox="0 0 16 16"><use href="#f"/><path d="M4 7h9v7H4zM4 9.500h9M4 12h9M7 7v7M10 7v7" fill="none" stroke="#111"/></svg><span>Table</span></div>
      <div class="row"><i class="c"></i><i class="c t p"></i><svg class="ic" viewBox="0 0 16 16"><use href="#f"/><circle cx="8" cy="10.500" r="3.300" fill="none" stroke="#111" stroke-width="1.300"/><path d="M6 6h4" stroke="#111"/></svg><span>Timers</span></div>
      <div class="row"><i class="c"></i><i class="c t"></i><svg class="ic" viewBox="0 0 16 16"><path d="M1 15 4 6h3l-2 9z" fill="#2a3a9a" stroke="#222"/><path d="M5 15 7 3h3L8 15z" fill="#1aa8b8" stroke="#222"/><path d="m9 15 2-14h4l-2 14z" fill="#18b030" stroke="#0a4a18"/></svg><span>Libraries</span></div>
      <div class="row"><i class="c"></i><i class="c l p"></i><svg class="ic" viewBox="0 0 16 16"><use href="#f"/><use href="#chip"/></svg><span>Call Subroutines</span></div>
    </section>

    <section class="editor">
      <div class="ruler-row">
        <span class="ruler-lead">·</span>
        <div class="ruler ruler-w"><span><em>2</em></span><span><em>3</em></span><span><em>4</em></span><span><em>5</em></span><span><em>6</em></span><span><em>7</em></span></div>
        <div class="ruler ruler-g"><span><em>8</em></span></div>
      </div>

      <div class="var-panel">
        <div class="hatch"></div>
        <div class="var-body">
          <table class="vars">
            <colgroup><col class="v0"><col class="v1"><col class="v2"><col class="v3"><col class="v4"></colgroup>
            <thead><tr><th></th><th>Symbol</th><th>Var Type</th><th>Data Type</th><th>Comment</th></tr></thead>
            <tbody>
              <tr><th></th><td></td><td class="tp">TEMP</td><td></td><td></td></tr>
              <tr><th></th><td></td><td class="tp">TEMP</td><td></td><td></td></tr>
              <tr><th></th><td></td><td class="tp">TEMP</td><td></td><td></td></tr>
              <tr><th></th><td></td><td class="tp">TEMP</td><td></td><td></td></tr>
            </tbody>
          </table>
        </div>
      </div>

      <div class="code-panel">
        <div class="code-row">
          <div class="hatch"></div>
          <div class="code">
            <div class="box big">PROGRAM COMMENTS</div>

            <div class="net-head first"><b>Network 1</b><span class="nt">Network Title</span></div>
            <div class="box">Stoppfunksjoner</div>
            <svg class="lad lad1" viewBox="0 0 400 83">
              <text x="50" y="19">F4:I0.0</text><text x="150" y="19">S0:I0.1</text><text x="250" y="19">M0.0</text>
              <path class="w" d="M0 33h34M65 33h69M165 33h63"/>
              <use href="#ladnc" x="34" y="23" width="31" height="20"/><use href="#ladnc" x="134" y="23" width="31" height="20"/><use href="#ladco" x="228" y="23" width="44" height="20"/>
            </svg>
            <table class="syms">
              <colgroup><col class="s1"><col class="s2"><col class="s3"></colgroup>
              <thead><tr><th>Symbol</th><th>Address</th><th>Comment</th></tr></thead>
              <tbody><tr><td>F4</td><td>I0.0</td><td></td></tr><tr><td>S0</td><td>I0.1</td><td></td></tr></tbody>
            </table>

            <div class="net-head"><b>Network 2</b></div>
            <div class="box">Start Q1</div>
            <svg class="lad lad2" viewBox="0 0 400 137">
              <text x="50" y="19">S1:I0.2</text><text x="150" y="19">M0.0</text><text x="250" y="19">Q2:Q0.1</text><text x="350" y="19">Q1:Q0.0</text><text x="50" y="73">Q1:Q0.0</text>
              <path class="w" d="M0 33h34M65 33h69M165 33h69M265 33h63M0 87h34M65 87h34V33"/>
              <use href="#ladct" x="34" y="23" width="31" height="20"/><use href="#ladct" x="134" y="23" width="31" height="20"/><use href="#ladnc" x="234" y="23" width="31" height="20"/><use href="#ladco" x="328" y="23" width="44" height="20"/><use href="#ladct" x="34" y="77" width="31" height="20"/>
            </svg>
            <table class="syms">
              <colgroup><col class="s1"><col class="s2"><col class="s3"></colgroup>
              <thead><tr><th>Symbol</th><th>Address</th><th>Comment</th></tr></thead>
              <tbody><tr><td>Q1</td><td>Q0.0</td><td></td></tr><tr><td>Q2</td><td>Q0.1</td><td></td></tr><tr><td>S1</td><td>I0.2</td><td></td></tr></tbody>
            </table>

            <div class="net-head"><b>Network 3</b></div>
            <div class="box">Start Q2</div>
            <svg class="lad lad2" viewBox="0 0 400 137">
              <text x="50" y="19">S2:I0.3</text><text x="150" y="19">M0.0</text><text x="250" y="19">Q1:Q0.0</text><text x="350" y="19">Q2:Q0.1</text><text x="50" y="73">Q2:Q0.1</text>
              <path class="w" d="M0 33h34M65 33h69M165 33h69M265 33h63M0 87h34M65 87h34V33"/>
              <use href="#ladct" x="34" y="23" width="31" height="20"/><use href="#ladct" x="134" y="23" width="31" height="20"/><use href="#ladnc" x="234" y="23" width="31" height="20"/><use href="#ladco" x="328" y="23" width="44" height="20"/><use href="#ladct" x="34" y="77" width="31" height="20"/>
            </svg>
            <table class="syms">
              <colgroup><col class="s1"><col class="s2"><col class="s3"></colgroup>
              <thead><tr><th>Symbol</th><th>Address</th><th>Comment</th></tr></thead>
              <tbody><tr><td>Q1</td><td>Q0.0</td><td></td></tr><tr><td>Q2</td><td>Q0.1</td><td></td></tr><tr><td>S2</td><td>I0.3</td><td></td></tr></tbody>
            </table>

            <div class="net-head"><b>Network 4</b></div>
            <div class="box"></div>
            <svg class="lad lad1" viewBox="0 0 400 83">
              <path class="w" d="M0 33h49M41 24l8 9-8 9M50 22v22"/>
            </svg>
          </div>
          <div class="vscroll">
            <span class="sb-btn"><svg viewBox="0 0 16 16"><path d="M4 10h8L8 5z"/></svg></span>
            <span class="sb-thumb"></span>
            <span class="sb-track"></span>
            <span class="sb-btn"><svg viewBox="0 0 16 16"><path d="M4 6h8l-4 5z"/></svg></span>
          </div>
        </div>
        <div class="tabbar">
          <div class="tabs">
            <span class="tnav"><svg viewBox="0 0 13 13"><path d="M8 3v7L4 6.500zM3 3v7" fill="#333" stroke="#333"/></svg></span>
            <span class="tnav"><svg viewBox="0 0 13 13"><path d="M8 3v7L4 6.500z" fill="#333"/></svg></span>
            <span class="tnav"><svg viewBox="0 0 13 13"><path d="M5 3v7l4-3.500z" fill="#333"/></svg></span>
            <span class="tnav"><svg viewBox="0 0 13 13"><path d="M4 3v7l4-3.500zM9 3v7" fill="#333" stroke="#333"/></svg></span>
            <span class="tab on">MAIN</span><span class="tab t2">SBR_0</span><span class="tab t3">INT_0</span>
          </div>
          <span class="sb-btn h"><svg viewBox="0 0 16 16"><path d="M10 4v8L5 8z"/></svg></span>
          <span class="sb-thumb h"></span>
          <span class="sb-track h"></span>
          <span class="sb-btn h"><svg viewBox="0 0 16 16"><path d="M6 4v8l5-4z"/></svg></span>
        </div>
      </div>
    </section>
  </main>

  <section class="output">
    <div class="out-box">
      <span class="out-text">Total Errors: 0</span>
      <div class="xp-sb">
        <span class="xp-btn"><svg viewBox="0 0 16 16"><path d="m4 10 4-4 4 4" fill="none" stroke="#2a4a8a" stroke-width="2"/></svg></span>
        <span class="xp-btn"><svg viewBox="0 0 16 16"><path d="m4 6 4 4 4-4" fill="none" stroke="#2a4a8a" stroke-width="2"/></svg></span>
      </div>
    </div>
  </section>

  <footer class="status">
    <span class="st-msg">Ready</span>
    <span class="pane p1">Network 3</span><span class="pane p2">Comment</span><span class="pane p3">INS</span>
  </footer>

  <div class="taskbar">
    <div class="start">
      <svg viewBox="0 0 18 18"><path d="M2 3q3-2 6 0l-1 5q-3-2-6 0z" fill="#e8502a"/><path d="M9 3q3 2 7 0l-1 5q-3 2-7 0z" fill="#6cb83a"/><path d="M1 9q3-2 6 0l-1 5q-3-2-6 0z" fill="#3a8ae8"/><path d="M8 9q3 2 7 0l-1 5q-3 2-7 0z" fill="#f2c82a"/></svg>
      <span>Start</span>
    </div>
    <div class="tasks">
      <span class="task"><svg viewBox="0 0 16 16"><circle cx="5" cy="4" r="2.500" fill="#7cc8e8"/><path d="M1 13c0-5 8-5 8 0z" fill="#4a9ad0"/><circle cx="10" cy="6" r="2.500" fill="#90e070"/><path d="M5 15c0-6 10-6 10 0z" fill="#58b840"/></svg><span>Windows Live Messen…</span></span>
      <span class="task"><svg viewBox="0 0 16 16"><use href="#ff"/></svg><span>Hjelp med pls-progra…</span></span>
      <span class="task"><svg viewBox="0 0 16 16"><use href="#ff"/></svg><span>http://www.diskusjon…</span></span>
      <span class="task"><svg viewBox="0 0 16 16"><use href="#ff"/></svg><span>Nedlastinger</span></span>
      <span class="task"><svg viewBox="0 0 16 16"><path d="m2 13 8-11 3 3-8 10z" fill="#e8a030" stroke="#4a3a18"/><path d="m6 12 7-9 2 2-7 9z" fill="#d8d0a0" stroke="#4a3a18"/></svg><span>8. Kings of Convenie…</span></span>
      <span class="task"><svg viewBox="0 0 16 16"><path d="M3 1h10l2 2v12H3z" fill="#f0f0f0" stroke="#b02818"/><path d="M1 4h10v9H1z" fill="#d8442a"/><circle cx="6" cy="8.500" r="2.500" fill="none" stroke="#fff" stroke-width="1.400"/></svg><span>Microsoft PowerPoint …</span></span>
      <span class="task active"><svg viewBox="0 0 16 16"><path d="M1 2h14v12H1z" fill="#dedbc8" stroke="#222"/><path d="M1 2h14v2H1z" fill="#1c3c8c"/><path d="M3 6h4v6H3z" fill="#222"/></svg><span>STEP 7-Micro/WIN - P…</span></span>
    </div>
    <span class="lang">NO</span>
    <div class="tray">
      <span class="chev"><svg viewBox="0 0 18 18"><path d="M11 4 6 9l5 5" fill="none" stroke="#fff" stroke-width="2.600"/></svg></span>
      <svg class="ti-ic" viewBox="0 0 16 16"><circle cx="8" cy="8" r="7" fill="#e04848" stroke="#a02020"/><circle cx="8" cy="8" r="3" fill="#fff"/><path d="M2 6h12M2 10h12" stroke="#fff"/></svg>
      <svg class="ti-ic" viewBox="0 0 16 16"><path d="M1 1h7v7H1z" fill="#f0d800"/><path d="M8 1h7v7H8z" fill="#000"/><path d="M1 8h7v7H1z" fill="#0a7a20"/><path d="M8 8h7v7H8z" fill="#d01818"/></svg>
      <svg class="ti-ic" viewBox="0 0 16 16"><circle cx="8" cy="5" r="3.500" fill="#a8e088"/><path d="M2 15c0-7 12-7 12 0z" fill="#68b850"/></svg>
      <svg class="ti-ic" viewBox="0 0 16 16"><path d="M1 1h14v10H1z" fill="#d8d8e0" stroke="#1a2a60"/><path d="M1 13h6v2H1zM9 13h6v2H9z" fill="#fff" stroke="#1a2a60"/></svg>
      <svg class="ti-ic" viewBox="0 0 16 16"><path d="M1 5q7-6 14 0M3 8q5-4 10 0M5 11q3-2 6 0" fill="none" stroke="#44e028" stroke-width="2"/><path d="m8 15-2-3h4z" fill="#44e028"/></svg>
      <span class="clock">22:09</span>
    </div>
  </div>
</div>
</body>
</html>
```

FILE: styles.css
```css
* { box-sizing: border-box; }
html, body { margin: 0; padding: 0; }
body { background: #ece9d8; font: 11px/14px "Liberation Sans", Arial, sans-serif; color: #111; letter-spacing: -.2px; }
.defs { position: absolute; width: 0; height: 0; }
.app { width: 1920px; height: 1200px; display: flex; flex-direction: column; overflow: hidden; }

/* title bar */
.titlebar { height: 26px; flex: none; display: flex; align-items: center; padding: 0 2px 1px 4px; gap: 1px;
  background: linear-gradient(#2a78ee 0, #0a5ae6 3px, #0458e8 14px, #0a50d4 22px, #0a46b8 100%); color: #fff; }
.title-ic { width: 16px; height: 16px; }
.title-text { flex: 1; font: bold 13px/16px "Liberation Sans", sans-serif; text-shadow: 1px 1px 0 #0a3a9a; }
.win-btn { width: 22px; height: 22px; border: 1px solid #dfe8ff; border-radius: 3px; background: radial-gradient(circle at 30% 30%, #4a80ee, #1e4fc8 80%); display: flex; }
.win-btn.close { background: radial-gradient(circle at 30% 30%, #ea8a68, #cc3a18 80%); }
.win-btn svg { width: 20px; height: 20px; }

/* menu */
.menubar { height: 21px; flex: none; display: flex; align-items: center; position: relative; border-bottom: 1px solid #fff; box-shadow: inset 0 -1px 0 #c8c5b2; padding-left: 5px; }
.menu-ic { width: 16px; height: 16px; flex: none; }
.mi { flex: none; }
.m1 { margin-left: 3px; width: 28px; }
.m2 { width: 31px; }
.m3 { width: 33px; }
.m4 { width: 30px; }
.m5 { width: 44px; }
.m6 { width: 37px; }
.m7 { width: 54px; }
.m8 { width: 30px; }
.mdi-btns { margin-left: auto; display: flex; gap: 4px; padding-right: 2px; }
.mdi { width: 14px; height: 14px; display: flex; }
.mdi svg { width: 14px; height: 14px; }

/* toolbars */
.toolrow { display: flex; align-items: center; flex: none; padding-left: 5px; }
.tr1 { height: 32px; border-bottom: 1px solid #fff; box-shadow: inset 0 -1px 0 #c8c5b2; }
.tr2 { height: 31px; }
.grip { width: 5px; height: 27px; flex: none; border: 1px solid; border-color: #fff #aca899 #aca899 #fff; }
.gap-grip { margin: 0 1px 0 11px; width: 6px; }
.grip2 { margin: 0 4px 0 8px; }
.tb { width: 23px; height: 22px; flex: none; display: flex; align-items: center; justify-content: center; }
.tb svg { width: 17px; height: 17px; }
.tb.on { background: #f7f6f0; border: 1px solid; border-color: #aca899 #fff #fff #aca899; }
.ts { width: 8px; height: 25px; flex: none; background: linear-gradient(#aca899, #aca899) center/1px 100% no-repeat; }
.ts.wide { width: 10px; }
.tr2 .ts { width: 9px; }
.toolend { width: 12px; height: 29px; flex: none; background: linear-gradient(#c8c5b2, #c8c5b2) right/1px 100% no-repeat; }
.t1end { height: 31px; width: 11px; }
.t2end { width: 8px; }
.sym { display: block; text-align: center; color: #222; font-size: 11px; line-height: 12px; padding-top: 3px; }
.sym-w { display: block; width: 14px; height: 3px; margin: 1px auto 0; background: repeating-linear-gradient(90deg, #1a8a2a 0 2px, transparent 2px 3px); }

/* main */
.main { flex: none; height: 989px; display: flex; }

/* left bar */
.nav { width: 105px; flex: none; padding: 2px 7px 6px 3px; display: flex; flex-direction: column; }
.nav-head, .nav-foot { height: 18px; flex: none; text-align: center; line-height: 17px; background: #ece9d8; border: 1px solid; border-color: #fff #716f64 #716f64 #fff; }
.nav-foot { margin: 0 1px; }
.nav-list { flex: 1; background: #a6a396; padding-top: 13px; border-left: 1px solid #8f8c80; }
.nav-item { height: 62px; display: flex; flex-direction: column; align-items: center; color: #eeece0; text-align: center; }
.nav-item svg { width: 32px; height: 32px; flex: none; margin-bottom: 3px; }
.nav-item span { font-size: 11.500px; line-height: 14px; letter-spacing: -.3px; }

/* tree */
.tree { width: 202px; flex: none; background: #fff; border: solid #111; border-width: 2px 0 0 2px; box-shadow: 0 -1px 0 #777; margin-bottom: 5px; overflow: hidden; font-size: 11.500px; letter-spacing: -.42px; }
.row { height: 16px; display: flex; align-items: center; margin-left: -2px; white-space: nowrap; }
b { letter-spacing: .45px; }
.tree b { letter-spacing: .1px; }
.c { width: 19px; height: 16px; flex: none; position: relative; }
.v { background: repeating-linear-gradient(#8a8a8a 0 1px, transparent 1px 2px) center/1px 100% no-repeat; }
.t { background: repeating-linear-gradient(#8a8a8a 0 1px, transparent 1px 2px) center/1px 100% no-repeat, repeating-linear-gradient(90deg, #8a8a8a 0 1px, transparent 1px 2px) right center/50% 1px no-repeat; }
.l { background: repeating-linear-gradient(#8a8a8a 0 1px, transparent 1px 2px) center top/1px 50% no-repeat, repeating-linear-gradient(90deg, #8a8a8a 0 1px, transparent 1px 2px) right center/50% 1px no-repeat; }
.m.top { background: repeating-linear-gradient(#8a8a8a 0 1px, transparent 1px 2px) center bottom/1px 50% no-repeat; }
.m.last { background: repeating-linear-gradient(#8a8a8a 0 1px, transparent 1px 2px) center top/1px 50% no-repeat; }
.p::after, .m::after { content: ""; position: absolute; left: 5px; top: 3px; width: 9px; height: 9px; border: 1px solid #808080;
  background: linear-gradient(#000, #000) center/5px 1px no-repeat, #fff; }
.p::after { background: linear-gradient(#000, #000) center/5px 1px no-repeat, linear-gradient(#000, #000) center/1px 5px no-repeat, #fff; }
.ic { width: 16px; height: 16px; flex: none; margin: 0 5px 0 1px; }
.ic.small { width: 13px; height: 13px; margin: 0 6px 0 3px; }
.qm { font: bold 10px "Liberation Sans", sans-serif; fill: #1a1a6a; }
.sel { background: #ece9d8; padding-right: 2px; line-height: 16px; }

/* editor */
.editor { flex: 1; min-width: 0; display: flex; flex-direction: column; padding-left: 6px; }
.ruler-row { height: 21px; flex: none; display: flex; padding-top: 2px; }
.ruler-lead { width: 20px; text-align: center; line-height: 16px; flex: none; }
.ruler { height: 17px; display: flex; flex: none; overflow: hidden; line-height: 16px; text-align: center; font-size: 12px;
  background-image: repeating-linear-gradient(90deg, transparent 0 48px, #444 48px 49px, transparent 49px 96px), radial-gradient(circle at center, #333 .7px, transparent 1px);
  background-size: 100% 7px, 12px 100%; background-repeat: no-repeat, repeat-x; background-position: 0 center, -6px 0; }
.ruler span { width: 96px; flex: none; }
.ruler em { font-style: normal; padding: 0 3px; }
.ruler-w { width: 601px; padding-left: 48px; background-color: #fff; border: 1px solid #444; border-width: 1px 1px 0 1px; }
.ruler-w em { background: #fff; }
.ruler-g { width: 96px; padding-left: 23px; background-color: #ece9d8; border-top: 1px solid #ccc; background-position: -23px center, 0 0; }
.ruler-g em { background: #ece9d8; }

.var-panel { height: 102px; flex: none; display: flex; border-top: 2px solid #111; border-right: 2px solid #777; box-shadow: 0 1px 0 #9a9a8c; }
.hatch { width: 20px; flex: none; background: repeating-conic-gradient(#f2f0e4 0 25%, #b8b6a8 0 50%) 0 0/2px 2px; }
.var-body { flex: 1; border-left: 2px solid #111; background: #ece9d8; border-bottom: 1px solid #111; }
.vars { border-collapse: separate; border-spacing: 0; table-layout: fixed; width: 602px; margin: -1px 0 0 1px; }
.v0 { width: 39px; }
.v1 { width: 125px; }
.v2 { width: 75px; }
.v3 { width: 75px; }
.v4 { width: 288px; }
.vars thead th { height: 17px; padding: 0; font-weight: normal; background: #ece9d8; border: 1px solid; border-color: #fff #333 #333 #fff; border-width: 0 2px 2px 1px; }
.vars tbody th { height: 16px; padding: 0; background: #ece9d8; border: 1px solid; border-color: #fff #333 #333 #fff; border-width: 0 2px 2px 1px; }
.vars td { height: 16px; padding: 0 3px; background: #fff; border: 1px solid #9a9a94; border-width: 0 1px 1px 0; }
.vars td.tp { background: #ece9d8; }

.code-panel { flex: 1; min-height: 0; margin-top: 4px; display: flex; flex-direction: column; border-top: 2px solid #111; }
.code-row { height: 836px; flex: none; display: flex; background: #fff; }
.code { width: 1568px; flex: none; border-left: 2px solid #111; padding: 6px 0 0 5px; overflow: hidden; }
.box { width: 597px; height: 16px; border: 1px solid #111; background: #ece9d8; color: #1a7a1a; padding-left: 3px; line-height: 14px; }
.box.big { height: 17px; line-height: 15px; }
.net-head { height: 24px; line-height: 24px; width: 597px; }
.net-head.first { line-height: 22px; }
.nt { color: #1a7a1a; margin-left: 26px; }
.lad { display: block; width: 400px; margin-left: -5px; overflow: visible; }
.lad1 { height: 83px; }
.lad2 { height: 137px; }
.lad text { font: 11.500px "Liberation Sans", sans-serif; letter-spacing: -.2px; text-anchor: middle; fill: #222; }
.w { fill: none; stroke: #000; stroke-width: 2; }
.syms { width: 597px; border-collapse: collapse; table-layout: fixed; margin-bottom: 10px; }
.s1 { width: 125px; }
.s2 { width: 100px; }
.s3 { width: 372px; }
.syms th { height: 17px; padding: 0 3px; text-align: left; font-weight: normal; background: #ece9d8; border: 1px solid #888; border-bottom: 2px solid #333; border-right: 2px solid #333; }
.syms td { height: 15px; padding: 0 3px; line-height: 13px; border: 1px solid #8a8a8a; }

.vscroll { width: 17px; flex: none; margin-top: 1px; display: flex; flex-direction: column; }
.sb-btn { width: 17px; height: 16px; flex: none; background: #ece9d8; border: 1px solid; border-color: #fff #716f64 #716f64 #fff; display: flex; align-items: center; justify-content: center; }
.sb-btn svg { width: 14px; height: 14px; fill: #000; }
.sb-thumb { height: 158px; flex: none; background: #e8e5d4; border: 1px solid; border-color: #fff #716f64 #716f64 #fff; }
.sb-track { flex: 1; background: repeating-conic-gradient(#f4f2e6 0 25%, #d0cebf 0 50%) 0 0/2px 2px; }
.tabbar { height: 17px; flex: none; display: flex; padding-left: 2px; }
.tabs { width: 801px; flex: none; margin-right: 3px; background: #d4d0c8; border-top: 1px solid #111; border-right: 1px solid #111; display: flex; align-items: center; overflow: hidden; }
.tnav { width: 16.500px; height: 16px; flex: none; border-right: 1px solid #333; display: flex; align-items: center; justify-content: center; }
.tnav svg { width: 13px; height: 13px; }
.tab { flex: none; height: 16px; line-height: 16px; background: #ece9d8; position: relative; font-size: 11.500px; }
.tab::before, .tab::after { content: ""; position: absolute; top: 0; width: 1px; height: 16px; background: #333; }
.tab::before { left: 5px; transform: skewX(20deg); }
.tab::after { right: 2px; transform: skewX(-20deg); }
.tab.on { font-weight: bold; width: 49px; padding-left: 12px; color: #000; letter-spacing: .2px; background: #fff; }
.tab.t2 { width: 52px; padding-left: 10px; }
.tab.t3 { width: 50px; padding-left: 11px; }
.sb-btn.h { width: 17px; height: 17px; }
.sb-thumb.h { height: 17px; width: 367px; }
.sb-track.h { height: 17px; flex: none; width: 382px; }

/* output */
.output { height: 51px; flex: none; border-top: 2px solid #111; padding: 3px 2px 3px 5px; }
.out-box { height: 43px; background: #fff; border-top: 2px solid #716f64; border-left: 2px solid #716f64; display: flex; align-items: center; justify-content: space-between; }
.out-text { padding-top: 2px; }
.xp-sb { width: 17px; display: flex; flex-direction: column; gap: 6px; margin-right: 1px; }
.xp-btn { width: 15px; height: 16px; border-radius: 2px; background: linear-gradient(135deg, #e4ecfc, #b8c8f0); border: 1px solid #a8b8e0; display: flex; }
.xp-btn svg { width: 13px; height: 14px; }

/* status */
.status { height: 20px; flex: none; display: flex; align-items: center; border-top: 1px solid #fff; box-shadow: inset 0 1px 0 #c8c5b2; padding: 1px 2px 0 2px; }
.st-msg { width: 1671px; flex: none; font-size: 11.500px; padding-top: 2px; }
.pane { height: 15px; flex: none; border: 1px solid; border-color: #aca899 #fff #fff #aca899; padding-left: 1px; line-height: 14px; }
.p1 { width: 105px; margin-right: 3px; }
.p2 { width: 104px; margin-right: 3px; }
.p3 { width: 31px; }

/* taskbar */
.taskbar { height: 30px; flex: none; display: flex; align-items: center; color: #fff; background: linear-gradient(#3a7ae8 0, #245edb 3px, #2663de 14px, #1f55c6 100%); font-size: 11px; letter-spacing: .1px; }
.start { width: 98px; height: 30px; flex: none; display: flex; align-items: center; padding-left: 10px; gap: 6px; border-radius: 0 10px 10px 0; background: linear-gradient(#3f9a3f, #3a933a 20%, #2f8a2f 70%, #3a8e3a); }
.start svg { width: 18px; height: 18px; }
.start span { font: italic bold 18px "Liberation Sans", sans-serif; text-shadow: 1px 1px 1px #1a4a1a; }
.tasks { display: flex; gap: 2px; padding-left: 11px; flex: none; width: 1540px; }
.task { width: 158px; height: 25px; flex: none; display: flex; align-items: center; gap: 4px; padding: 0 4px 0 8px; border-radius: 2px; background: #3c81f3; box-shadow: inset 1px 1px 0 #5a98f8; white-space: nowrap; }
.task svg { width: 16px; height: 16px; flex: none; }
.task.active { background: #1e52b7; box-shadow: inset 1px 1px 1px #0e3a8a; }
.lang { width: 118px; flex: none; text-align: right; padding-right: 12px; margin-left: auto; }
.tray { width: 147px; margin-left: auto; height: 30px; flex: none; display: flex; align-items: center; gap: 2px; background: linear-gradient(#20a0ee, #1088e0 15%, #0f80d8 85%, #1478c8); border-left: 1px solid #0e3a9a; }
.chev { width: 18px; height: 18px; margin-left: -9px; flex: none; border-radius: 50%; background: #3a88ee; border: 1px solid #cfe4ff; display: flex; }
.chev svg { width: 16px; height: 16px; }
.ti-ic { width: 15px; height: 15px; flex: none; margin-left: 1px; }
.clock { margin-left: 6px; font-size: 12px; }
```
